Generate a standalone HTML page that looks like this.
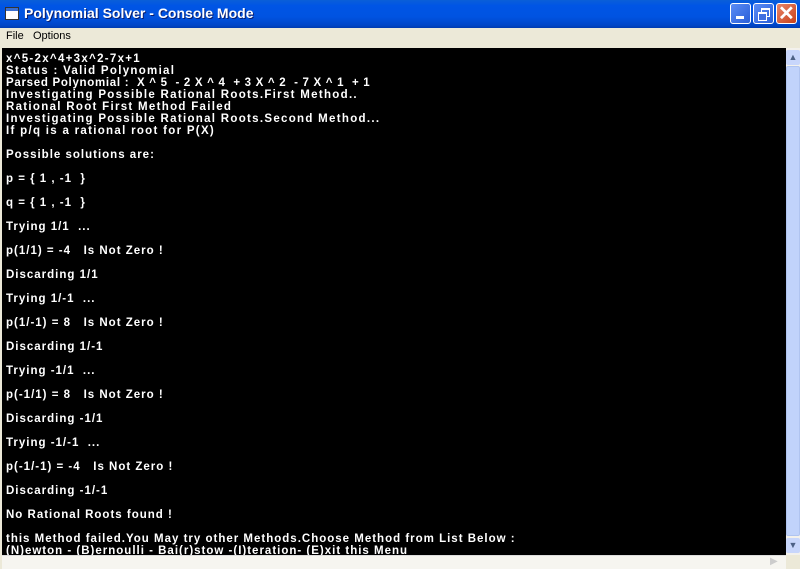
<!DOCTYPE html>
<html><head><style>
html,body{margin:0;padding:0;width:800px;height:568px;overflow:hidden;background:#ECE9D8;font-family:"Liberation Sans",Tahoma,sans-serif}
#title{position:absolute;left:0;top:0;width:800px;height:28px;background:linear-gradient(#0A5FD8,#0055E5 20%,#0053E1 60%,#0046C8 90%,#003BB0);}
#title .t{position:absolute;left:24px;top:5px;color:#fff;font-weight:bold;font-size:14px;text-shadow:1px 1px #0a1e6e}
#icon{position:absolute;left:5px;top:7px;width:12px;height:11px;background:#fff;border:1px solid #333}
#icon:after{content:"";position:absolute;left:0;top:0;width:12px;height:3px;background:#3a6ed0}
.btn{position:absolute;top:3px;width:21px;height:21px;border:1px solid #fff;border-radius:3px;background:linear-gradient(135deg,#5a8cf5,#2a5fd8);box-sizing:border-box}
#menu{position:absolute;left:0;top:28px;width:800px;height:19px;font-size:11px;color:#000}
#menu span{position:absolute;top:2px}
#con{position:absolute;left:2px;top:48px;width:784px;height:507px;background:#000;color:#fff;font-weight:bold;font-size:11.5px;line-height:12px;white-space:pre;padding:5px 0 0 4px;box-sizing:border-box;overflow:hidden;letter-spacing:1px}
#con .w{letter-spacing:1.3px}
#con .p{letter-spacing:0.7px}
#vs{position:absolute;left:786px;top:48px;width:14px;height:507px;background:#F3F1EC}
#hs{position:absolute;left:2px;top:555px;width:784px;height:13px;background:#F6F5F0;border-top:1px solid #ddd}
</style></head><body>
<div id="title"><div id="icon"></div><div class="t">Polynomial Solver - Console Mode</div>
<div class="btn" style="left:730px"><div style="position:absolute;left:5px;top:12px;width:8px;height:3px;background:#fff"></div></div>
<div class="btn" style="left:753px"><div style="position:absolute;left:7px;top:4px;width:7px;height:6px;border:1px solid #fff;border-top-width:2px"></div><div style="position:absolute;left:4px;top:8px;width:7px;height:6px;border:1px solid #fff;border-top-width:2px;background:#3d6ee0"></div></div>
<div class="btn" style="left:776px;background:linear-gradient(135deg,#e8866a,#c8411a)"><div style="position:absolute;left:1px;top:-3px;color:#fff;font-size:20px;font-weight:bold">✕</div></div>
</div>
<div id="menu"><span style="left:6px">File</span><span style="left:33px">Options</span></div>
<div id="con"><span class="w">x^5-2x^4+3x^2-7x+1
Status : Valid Polynomial
<span class="p">Parsed Polynomial :  X ^ 5  - 2 X ^ 4  + 3 X ^ 2  - 7 X ^ 1  + 1</span>
Investigating Possible Rational Roots.First Method..
Rational Root First Method Failed
Investigating Possible Rational Roots.Second Method...
If p/q is a rational root for P(X)</span>

Possible solutions are:

p = { 1 , -1  }

q = { 1 , -1  }

Trying 1/1  ...

p(1/1) = -4   Is Not Zero !

Discarding 1/1

Trying 1/-1  ...

p(1/-1) = 8   Is Not Zero !

Discarding 1/-1

Trying -1/1  ...

p(-1/1) = 8   Is Not Zero !

Discarding -1/1

Trying -1/-1  ...

p(-1/-1) = -4   Is Not Zero !

Discarding -1/-1

No Rational Roots found !

this Method failed.You May try other Methods.Choose Method from List Below :
(N)ewton - (B)ernoulli - Bai(r)stow -(I)teration- (E)xit this Menu</div>
<div id="vs">
<div style="position:absolute;left:0;top:2px;width:14px;height:15px;background:#C8D6FB;border-radius:2px;color:#4d6185;font-size:9px;text-align:center;line-height:15px">▲</div>
<div style="position:absolute;left:0;top:18px;width:14px;height:470px;background:#C1D3FB;border-radius:2px;border:1px solid #b0c4f0;box-sizing:border-box"></div>
<div style="position:absolute;left:0;top:490px;width:14px;height:15px;background:#C8D6FB;border-radius:2px;color:#4d6185;font-size:9px;text-align:center;line-height:15px">▼</div>
</div>
<div id="hs"><div style="position:absolute;right:2px;top:0;width:14px;height:12px;color:#ccc;font-size:10px">▶</div></div>
</body></html>
